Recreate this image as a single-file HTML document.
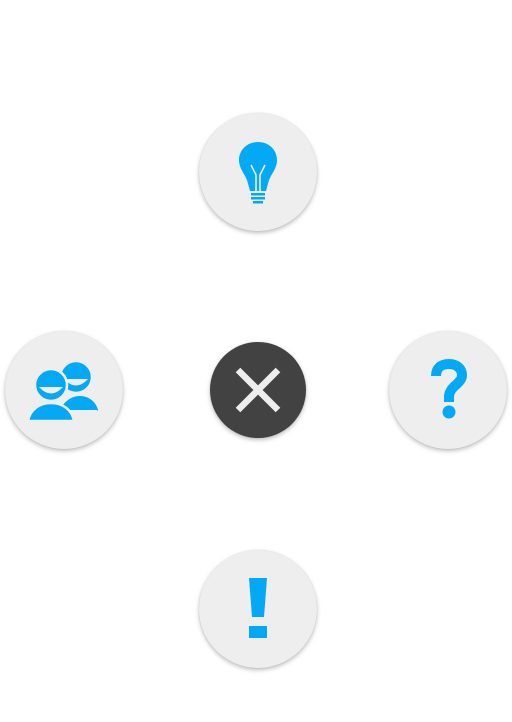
<!DOCTYPE html>
<html><head><style>
html,body{margin:0;padding:0;background:#fff;width:512px;height:722px;overflow:hidden}
.c{position:absolute;border-radius:50%;background:#eeeeee;box-shadow:0 2px 4px rgba(0,0,0,0.25),0 0 1px rgba(0,0,0,0.15)}
svg{position:absolute;left:0;top:0}
</style></head><body>
<div class="c" style="left:199px;top:113px;width:118px;height:118px"></div>
<div class="c" style="left:5px;top:331px;width:118px;height:118px"></div>
<div class="c" style="left:389px;top:331px;width:118px;height:118px"></div>
<div class="c" style="left:199px;top:550px;width:118px;height:118px"></div>
<div class="c" style="left:210px;top:342px;width:96px;height:96px;background:#424242"></div>
<svg width="512" height="722" viewBox="0 0 512 722">
<!-- bulb -->
<path d="M258 142 C247 142 239 150 239 160 C239 168 244 173 247 180 L250 191 L266 191 L269 180 C272 173 277 168 277 160 C277 150 269 142 258 142Z" fill="#03a9f4"/>
<path d="M251 165 L256 175 L256 191 M265 165 L260 175 L260 191" stroke="#eee" stroke-width="1.6" fill="none"/>
<rect x="251" y="193" width="14" height="2.5" fill="#03a9f4"/>
<rect x="251" y="197" width="14" height="2.5" fill="#03a9f4"/>
<rect x="253" y="201" width="10" height="2.5" fill="#03a9f4"/>
<!-- people -->
<path d="M62 421 C63 410 70 404 80 404 C90 404 97 410 98 411 L98 410 C96 402 88 397 80 397 Z" fill="#03a9f4"/>
<path d="M60 410 L98 410 C96 402 89 396 80 396 C72 396 64 401 60 410Z" fill="#03a9f4"/>
<circle cx="76" cy="377" r="16" fill="#03a9f4" stroke="#eee" stroke-width="2.5"/>
<path d="M64 379 Q76 392 88 379 Z" fill="#eee"/>
<path d="M28 421 C30 410 39 403 51 403 C63 403 72 410 74 421 Z" fill="#03a9f4" stroke="#eee" stroke-width="2.5"/>
<circle cx="51" cy="385" r="16" fill="#03a9f4" stroke="#eee" stroke-width="2.5"/>
<path d="M39 387 Q51 400 63 387 Z" fill="#eee"/>
<!-- question -->
<path d="M436 376 C436 368 441 364 449 364 C457 364 462 369 462 375 C462 384 449 386 449 397 L449 402" stroke="#03a9f4" stroke-width="10" fill="none"/>
<circle cx="449" cy="412" r="6.5" fill="#03a9f4"/>
<!-- exclamation -->
<path d="M249 578 L267 578 L264 617 L252 617 Z" fill="#03a9f4"/>
<rect x="249" y="626" width="18" height="12" fill="#03a9f4"/>
<!-- x -->
<path d="M238 370 L278 410 M278 370 L238 410" stroke="#eeeeee" stroke-width="6.5"/>
</svg>
</body></html>
